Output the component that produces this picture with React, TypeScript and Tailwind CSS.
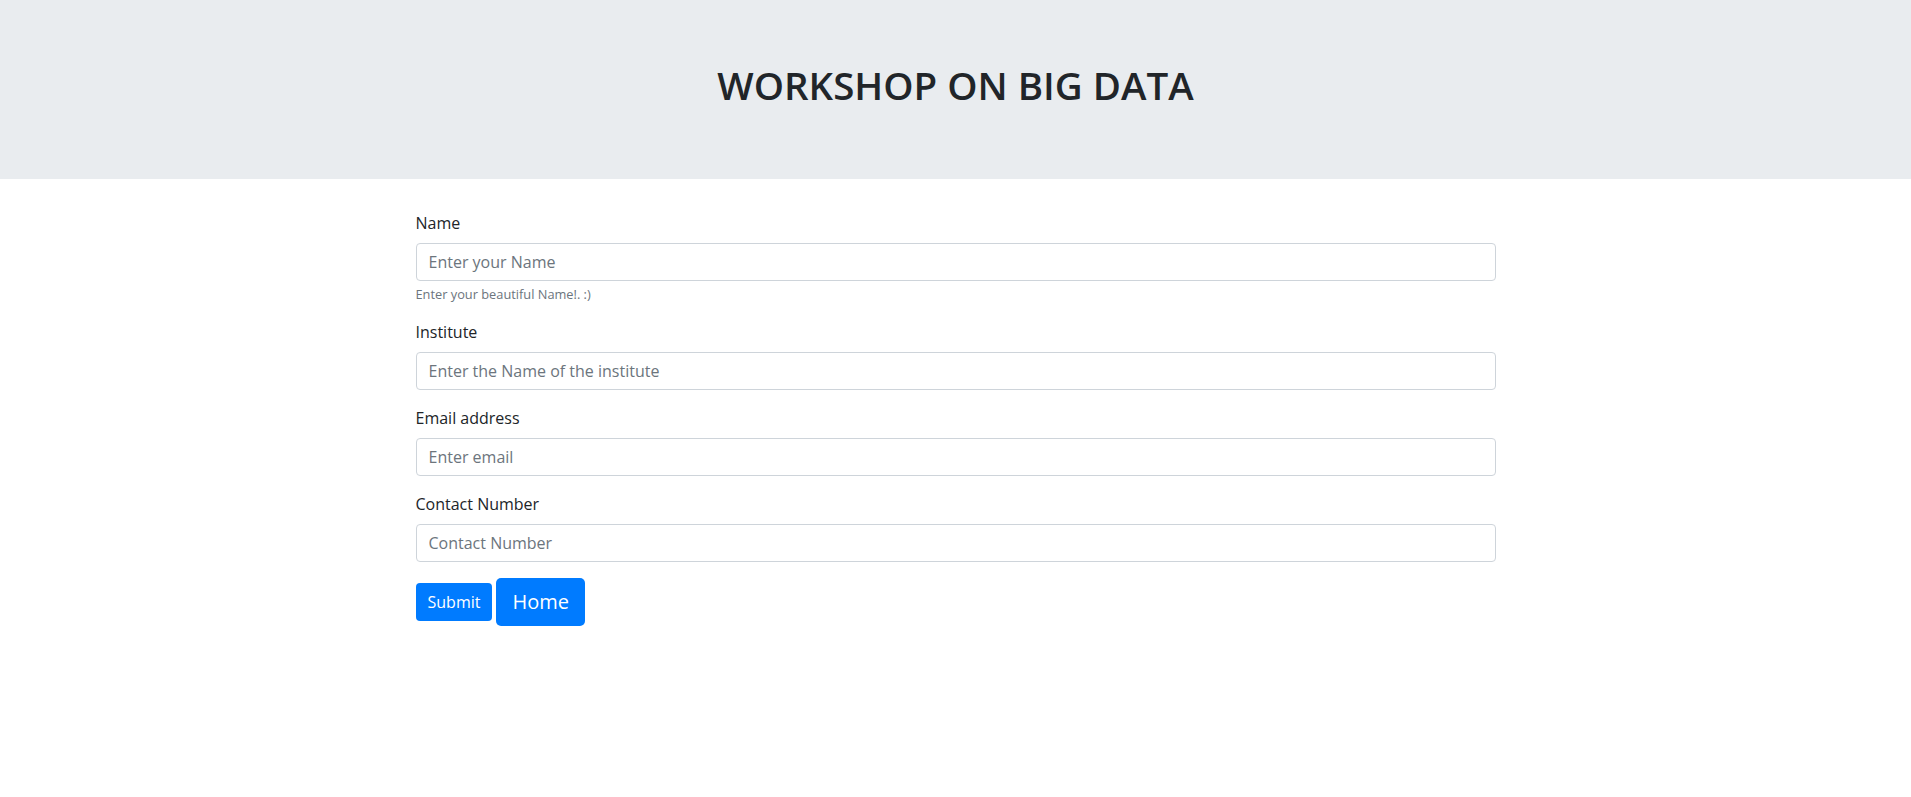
import React from "react";

const font = { fontFamily: '"Open Sans", "Noto Sans", sans-serif' };

function Field({ label, placeholder, help, type = "text" }: { label: string; placeholder: string; help?: string; type?: string }) {
  return (
    <div className="mb-4 flex flex-col">
      <label className="mb-2 text-[16px] leading-6 text-[#212529]">{label}</label>
      <input
        type={type}
        placeholder={placeholder}
        className="h-[38px] w-full rounded-[4px] border border-[#ced4da] bg-white px-3 text-[16px] text-[#495057] outline-none placeholder:text-[#6c757d]"
      />
      {help && <small className="mt-1 text-[12.8px] leading-[19.2px] text-[#6c757d]">{help}</small>}
    </div>
  );
}

export default function App() {
  return (
    <div className="min-h-[797px] bg-white text-[#212529]" style={font}>
      <div className="flex h-[179px] flex-col items-center bg-[#e9ecef] pt-[61px]">
        <h1 className="text-[38.5px] font-semibold leading-[48px] text-[#212529]">WORKSHOP ON BIG DATA</h1>
      </div>
      <div className="mx-auto mt-[32px] w-[1080px]">
        <Field label="Name" placeholder="Enter your Name" help="Enter your beautiful Name!. :)" />
        <Field label="Institute" placeholder="Enter the Name of the institute" />
        <Field label="Email address" placeholder="Enter email" type="email" />
        <Field label="Contact Number" placeholder="Contact Number" />
        <div className="flex items-center gap-1">
          <button className="h-[38px] rounded-[4px] bg-[#007bff] px-3 text-[16px] text-white">Submit</button>
          <button className="h-[48px] rounded-[5px] bg-[#007bff] px-4 text-[20px] text-white">Home</button>
        </div>
      </div>
    </div>
  );
}
